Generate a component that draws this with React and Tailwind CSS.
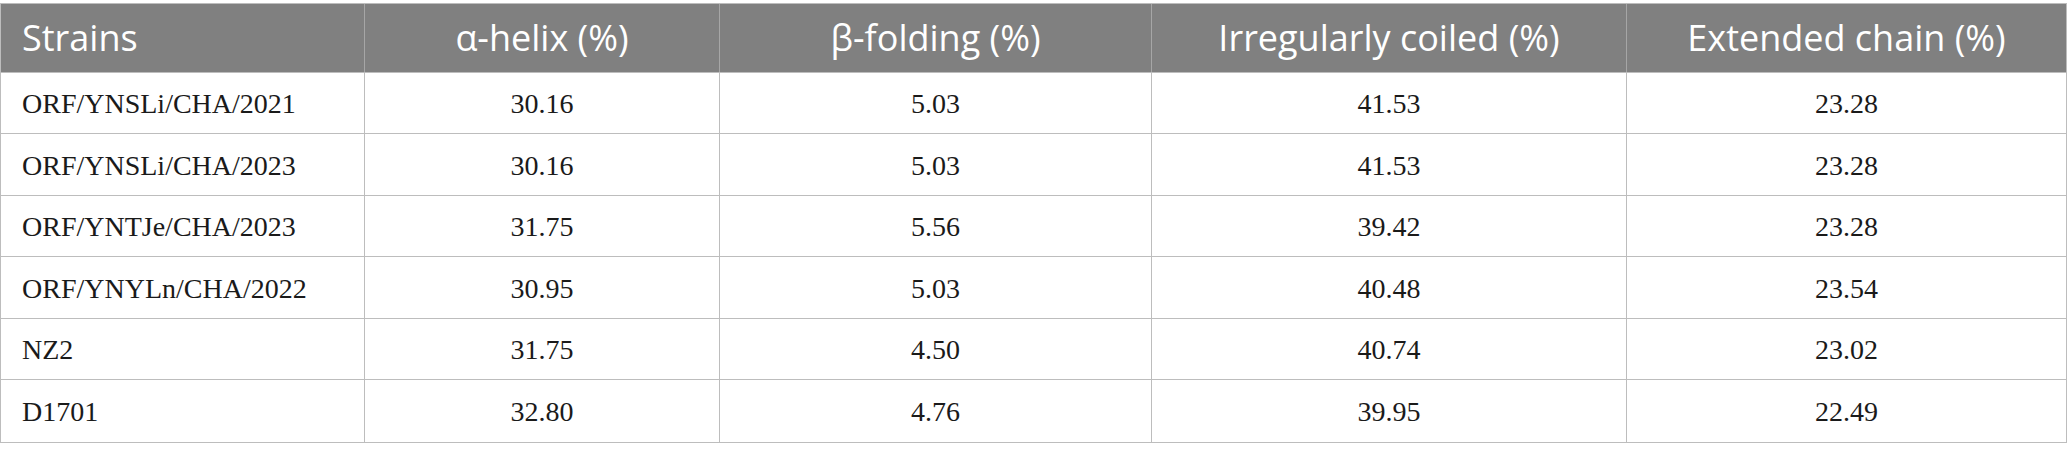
import React from 'react'

const rows = [
  { strain: "ORF/YNSLi/CHA/2021", helix: "30.16", folding: "5.03", coiled: "41.53", chain: "23.28" },
  { strain: "ORF/YNSLi/CHA/2023", helix: "30.16", folding: "5.03", coiled: "41.53", chain: "23.28" },
  { strain: "ORF/YNTJe/CHA/2023", helix: "31.75", folding: "5.56", coiled: "39.42", chain: "23.28" },
  { strain: "ORF/YNYLn/CHA/2022", helix: "30.95", folding: "5.03", coiled: "40.48", chain: "23.54" },
  { strain: "NZ2", helix: "31.75", folding: "4.50", coiled: "40.74", chain: "23.02" },
  { strain: "D1701", helix: "32.80", folding: "4.76", coiled: "39.95", chain: "22.49" },
]

const cols = "grid grid-cols-[363px_355px_432px_475px_440px]"

const App = () => {
  return (
    <div className="bg-white w-[2067px] h-[460px] pt-[3px]">
      <div className="w-[2067px] border border-[#bdbdbd]">
        <div className={`${cols} h-[69px] bg-[#808080] text-white text-[36px] font-['Open_Sans',sans-serif] border-b border-[#bdbdbd]`}>
          <div className="flex items-center pl-[21px]">Strains</div>
          <div className="flex items-center justify-center border-l border-[#a6a6a6]">α-helix (%)</div>
          <div className="flex items-center justify-center border-l border-[#a6a6a6]">β-folding (%)</div>
          <div className="flex items-center justify-center border-l border-[#a6a6a6]">Irregularly coiled (%)</div>
          <div className="flex items-center justify-center border-l border-[#a6a6a6]">Extended chain (%)</div>
        </div>
        {rows.map((r, i) => (
          <div
            key={r.strain}
            className={`${cols} ${i % 2 === 0 ? 'h-[61px]' : 'h-[62px]'} text-[28px] text-[#1a1a1a] font-['Liberation_Serif',serif] ${i < rows.length - 1 ? 'border-b border-[#bdbdbd]' : ''}`}
          >
            <div className="flex items-center pl-[21px] pt-[2px]">{r.strain}</div>
            <div className="flex items-center justify-center pt-[2px] border-l border-[#bdbdbd]">{r.helix}</div>
            <div className="flex items-center justify-center pt-[2px] border-l border-[#bdbdbd]">{r.folding}</div>
            <div className="flex items-center justify-center pt-[2px] border-l border-[#bdbdbd]">{r.coiled}</div>
            <div className="flex items-center justify-center pt-[2px] border-l border-[#bdbdbd]">{r.chain}</div>
          </div>
        ))}
      </div>
    </div>
  )
}

export default App
